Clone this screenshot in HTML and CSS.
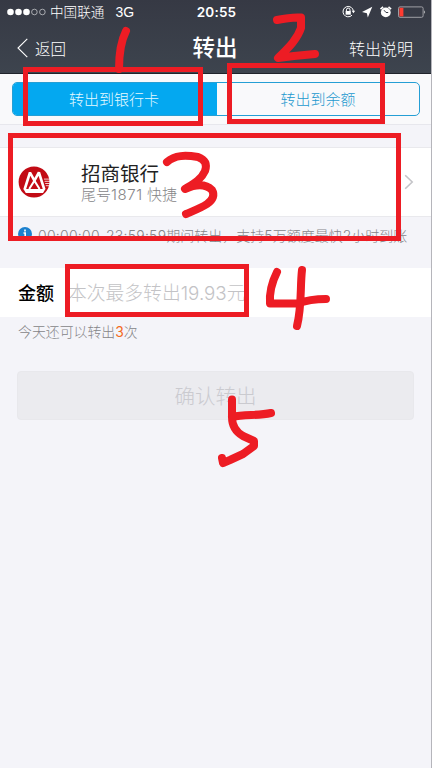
FILE: index.html
```html
<!DOCTYPE html>
<html lang="zh-CN">
<head>
<meta charset="utf-8">
<title>转出</title>
<link rel="stylesheet" href="styles.css">
</head>
<body>
<div class="screen">
  <header class="header">
    <div class="status">
      <div class="carrier">
        <svg class="signal" width="40" height="10" viewBox="0 0 40 10"><g fill="#fff"><circle cx="3.5" cy="5" r="3.3"/><circle cx="11.5" cy="5" r="3.3"/><circle cx="19.5" cy="5" r="3.3"/></g><g fill="none" stroke="#d6d7da" stroke-width=".7"><circle cx="27.4" cy="5" r="2.8"/><circle cx="35.4" cy="5" r="2.8"/></g></svg>
        <span>中国联通</span><span class="network">3G</span>
      </div>
      <span class="clock">20:55</span>
      <svg class="indicators" width="86" height="14" viewBox="0 0 86 14">
        <g fill="none" stroke="#fff" stroke-width="1"><path d="M12 10.2A5.2 5.2 0 1 1 13.4 6.2"/><path d="M6.4 6V4.9a1.8 1.8 0 0 1 3.6 0V6"/><path d="M11.7 5.8h3.5L13.4 8.2z" fill="#fff" stroke="none"/></g>
        <path d="M5.6 6h5.2v3.7H5.6z" fill="#fff"/>
        <path d="M32.3 1.8 27.8 12.6 26.9 8.3 22 7z" fill="#fff"/>
        <circle cx="45.8" cy="7.4" r="4.9" fill="#fff"/>
        <path d="m40.5 4.1 2.6-2.2M48.5 1.9l2.6 2.2" stroke="#fff" stroke-width="1.6"/>
        <path d="M44 5.2l2 2.3h2.2" fill="none" stroke="#383c48" stroke-width="1"/>
        <rect x="58.5" y="1.9" width="24.6" height="10.4" rx="1.5" fill="none" stroke="#aaaab0" stroke-width=".9"/>
        <path d="M59.4 2.8h4v8.6h-4z" fill="#ff3b30"/><path d="M84.2 5.3q1.8 1.8 0 3.6z" fill="#ddd"/>
      </svg>
    </div>
    <nav class="nav">
      <div class="back"><svg width="12" height="20" viewBox="0 0 12 20"><path d="M10.3.8 1 10l9.3 9.2" fill="none" stroke="#fff" stroke-width="1.1"/></svg><span>返回</span></div>
      <h1>转出</h1>
      <span class="help">转出说明</span>
    </nav>
  </header>
  <section class="tabs"><div class="segmented"><div class="tab active">转出到银行卡</div><div class="tab">转出到余额</div></div></section>
  <section class="bank">
    <svg class="logo" width="32" height="32" viewBox="0 0 32 32">
      <circle cx="16" cy="16" r="15.4" fill="#c20b15"/>
      <path d="M6.6 23.5 12 6.5 16.4 14.6 20.9 6.5 26.3 23.5" fill="none" stroke="#fff" stroke-width="2.6" stroke-linejoin="bevel"/>
      <path d="M11.2 23 16.4 14.6 21.6 23" fill="none" stroke="#fff" stroke-width="2"/>
      <path d="M5.4 23h22L25 27H7.8z" fill="#fff"/>
      <path d="M26 13.1h6M26.6 15.3h5.4M27.2 17.5h4.6M27.8 19.7h3.4" stroke="#fff" stroke-width=".8"/>
    </svg>
    <div class="account"><strong>招商银行</strong><span>尾号<i class="digits">1871</i> 快捷</span></div>
    <svg class="chevron" width="10" height="16" viewBox="0 0 10 16"><path d="m1.2 1.2 7 6.8-7 6.8" fill="none" stroke="#c4c4c8" stroke-width="1.6"/></svg>
  </section>
  <div class="notice"><svg width="14" height="14" viewBox="0 0 14 14"><circle cx="7" cy="7" r="7" fill="#1b80ce"/><path d="M7 2.5v2M5.5 6h1.7v4.6M5.2 10.7h3.7" stroke="#fff" stroke-width="1.6" fill="none"/></svg><span><span class="hours">00:00:00-23:59:59</span>期间转出，支持5万额度最快2小时到账</span></div>
  <section class="amount"><strong>金额</strong><span>本次最多转出19.93元</span></section>
  <p class="remaining">今天还可以转出<b>3</b>次</p>
  <div class="confirm">确认转出</div>
  <svg class="marks" width="432" height="768" viewBox="0 0 432 768">
    <g stroke-width="5"><path d="M25.5 69.5h175v54h-175zM229.5 65.5h153v56h-153zM10.5 135.5h388v103h-388zM67.5 266.5h179v48h-179z"/></g>
    <g stroke-width="8" stroke-linecap="round" stroke-linejoin="round">
      <path d="M126 31C121 41 119 52 119 69"/>
      <path d="M277 20C286 18 294 17 301 17.5L301 28C297 40 287 49 278 58L294 56 315 54"/>
      <path d="M167 162C175 155 185 155 198 157 206 160 207 165 205 171 201 180 193 184 185 189 194 185 205 183 212 190 215 195 213 200 207 204 201 208 193 211 186 214"/>
      <path d="M277 272C273 280 269 290 270 303.5H297Q310 299 326 299M302 270C300 287 302 306 297 326"/>
      <path d="M232 399.5V417C232 426 236 432 243 436L254 441V446L243 454 230 460 223 463 222 458M232 417C245 414 257 416 271 413"/>
    </g>
  </svg>
</div>
</body>
</html>
```
FILE: styles.css
```css
* { box-sizing: border-box; }
body { margin: 0; font-family: "Inter", "Noto Sans CJK SC", sans-serif; font-weight: 300; }
.screen { position: relative; width: 432px; height: 768px; overflow: hidden; background: #f4f4f9; border-right: 1px solid #b5b5bb; }
.header { height: 74px; color: #fff; background: linear-gradient(#363944, #3d444e); border-bottom: 1px solid #20242b; }
.status { height: 24px; display: grid; grid-template-columns: 1fr auto 1fr; align-items: center; padding: 0 5px 0 7px; }
.carrier { display: flex; align-items: center; font-size: 13.6px; line-height: 18px; }
.carrier span { margin-top: -1px; }
.signal { margin-right: 3px; }
.carrier .network { margin: 0 0 0 11px; font-family: "Liberation Sans", sans-serif; font-size: 14px; }
.clock { font: 600 13.5px "Inter", sans-serif; letter-spacing: .2px; }
.indicators { justify-self: end; }
.nav { height: 48px; display: grid; grid-template-columns: 1fr auto 1fr; align-items: center; padding: 0 18px 0 17px; }
.back { display: flex; align-items: center; gap: 6px; font-size: 15.5px; }
.nav h1 { margin: 0; font-size: 22.5px; font-weight: 500; line-height: 30px; }
.help { justify-self: end; font-size: 16px; }
.tabs { height: 51px; padding: 8px 11px 0 12px; background: #f9f9fb; border-bottom: 1px solid #e7e7ed; }
.segmented { display: grid; grid-template-columns: 204px 1fr; height: 34px; border: 1px solid #259fd5; border-radius: 5px; overflow: hidden; }
.tab { display: flex; align-items: center; justify-content: center; padding-bottom: 1px; color: #2298ce; font-size: 15px; }
.active { padding-right: 2px; background: #04a8f0; color: #e6faff; }
.bank { margin-top: 22px; height: 70px; display: flex; align-items: center; background: #fff; border: solid #e9e9ed; border-width: 1px 0; padding: 0 17px 0 18px; }
.account { display: flex; flex-direction: column; margin: 2px 0 0 31px; }
.account strong { font-size: 19.5px; font-weight: 400; line-height: 23px; color: #222; }
.account span { font-size: 15px; line-height: 18px; color: #858588; }
.digits { font-style: normal; letter-spacing: .6px; }
.chevron { margin-left: auto; }
.notice { height: 51px; padding: 10px 0 0 18px; display: flex; align-items: flex-start; gap: 6px; color: #858589; font-size: 14px; line-height: 18px; white-space: nowrap; }
.notice svg { flex-shrink: 0; }
.hours { letter-spacing: .25px; }
.amount { height: 49px; display: flex; align-items: center; gap: 14px; padding: 0 0 2px 18px; background: #fff; }
.amount strong { font-size: 18px; font-weight: 500; color: #000; }
.amount span { font-size: 18.8px; color: #c3c3c6; white-space: nowrap; }
.remaining { margin: 5px 0 0 18px; font-size: 13.9px; line-height: 20px; color: #858588; }
.remaining b { font-weight: 400; color: #f36a21; }
.confirm { margin: 29px 17px 0; height: 49px; padding-bottom: 2px; border-radius: 4px; background: #ebebef; border: 1px solid #e8e8ec; display: flex; align-items: center; justify-content: center; font-size: 20.5px; color: #cacacf; }
.marks { position: absolute; inset: 0; fill: none; stroke: #ed1c24; }
```
